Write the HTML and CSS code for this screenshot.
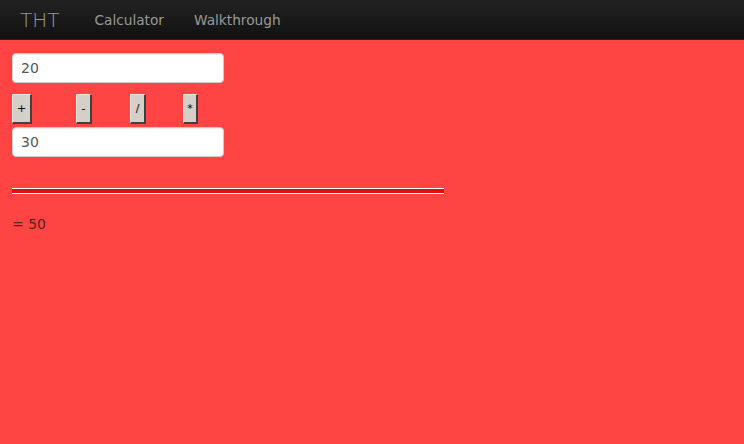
FILE: index.html
```html
<!DOCTYPE html>
<html>
<head>
<meta charset="utf-8">
<title>THT</title>
<link rel="stylesheet" href="styles.css">
</head>
<body>
<div class="navbar">
  <a class="brand" href="#">THT</a>
  <ul class="nav">
    <li><a href="#">Calculator</a></li>
    <li><a href="#">Walkthrough</a></li>
  </ul>
</div>
<main class="content">
  <input class="field field-first" type="text" value="20">
  <div class="ops">
    <button class="op op-plus">+</button>
    <button class="op op-minus">-</button>
    <button class="op op-div">/</button>
    <button class="op op-mul">*</button>
  </div>
  <input class="field" type="text" value="30">
  <hr class="rule">
  <p class="result">= 50</p>
</main>
</body>
</html>
```
FILE: styles.css
```css
html, body {
  margin: 0;
  padding: 0;
}
body {
  background: #ff4444;
  font-family: "DejaVu Sans", sans-serif;
  font-size: 14px;
  line-height: 20px;
  color: #333;
}
.navbar {
  display: flex;
  align-items: center;
  height: 40px;
  background: linear-gradient(#222222, #111111);
  border-bottom: 1px solid #252525;
  box-sizing: border-box;
}
.brand {
  display: block;
  padding: 10px 20px;
  font-size: 20px;
  font-weight: 200;
  line-height: 20px;
  color: #999;
  text-decoration: none;
}
.nav {
  display: flex;
  list-style: none;
  margin: 0;
  padding: 0;
}
.nav a {
  display: block;
  padding: 10px 15px;
  color: #999;
  text-decoration: none;
  font-size: 13.7px;
  line-height: 20px;
}
.content {
  display: flex;
  flex-direction: column;
  align-items: flex-start;
  padding: 12px 12px;
}
.field {
  box-sizing: border-box;
  width: 212px;
  height: 30px;
  padding: 4px 8px;
  margin: 0;
  font-family: "DejaVu Sans", sans-serif;
  font-size: 14px;
  line-height: 20px;
  color: #555;
  background: #fff;
  border: 1px solid #ccc;
  border-radius: 4px;
  box-shadow: inset 0 1px 1px rgba(0,0,0,0.075);
}
.field-first {
  margin-top: 1px;
}
.ops {
  display: flex;
  margin-top: 11px;
  margin-bottom: 3px;
}
.op {
  box-sizing: border-box;
  height: 30px;
  padding: 0;
  margin: 0;
  font-family: "DejaVu Sans", sans-serif;
  font-size: 11px;
  color: #000;
  background: #d4d0c8;
  border-style: solid;
  border-width: 1px 2px 2px 1px;
  border-color: #ece9e2 #404040 #404040 #ece9e2;
}
.op-plus {
  width: 20px;
  margin-right: 44px;
}
.op-minus {
  width: 16px;
  margin-right: 38px;
}
.op-div {
  width: 16px;
  margin-right: 37px;
}
.op-mul {
  width: 15px;
}
.rule {
  align-self: stretch;
  width: 432px;
  box-sizing: border-box;
  height: 6px;
  margin: 31px 0 0 0;
  background: #dd1111;
  border: 0;
  border-top: 1px solid #fff;
  border-bottom: 1px solid #fff;
}
.result {
  margin: 20px 0 0 0;
  color: #5a2020;
}
```
